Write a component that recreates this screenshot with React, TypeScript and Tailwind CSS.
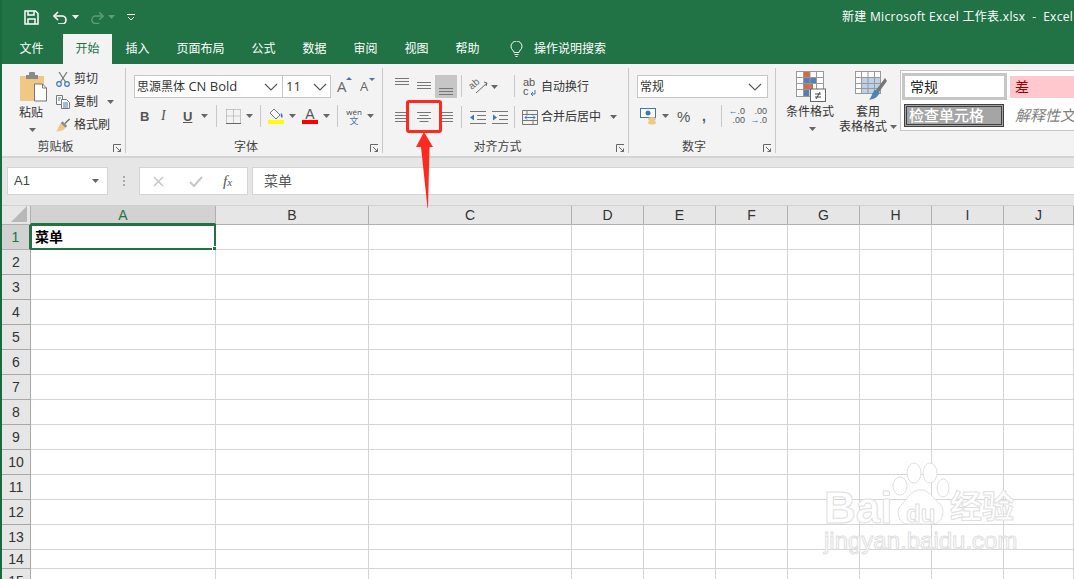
const cjk = "font-['Open_Sans','Noto_Sans_CJK_SC',sans-serif]";

function Caret({ className = '' }: { className?: string }) {
  return (
    <svg width="7" height="4" viewBox="0 0 7 4" className={`shrink-0 ${className}`}>
      <path d="M0 0h7L3.5 4z" fill="#666" />
    </svg>
  );
}

function Chevron() {
  return (
    <svg width="14" height="8" viewBox="0 0 14 8" fill="none" stroke="#555" strokeWidth="1.1">
      <path d="M1 1l6 6 6-6" />
    </svg>
  );
}

function Sep({ h = 'h-[22px]', mx = '' }: { h?: string; mx?: string }) {
  return <div className={`w-px bg-[#c8c8c8] shrink-0 ${h} ${mx}`} />;
}

// launcher arrow in the corner of each ribbon group
function Launcher() {
  return (
    <svg width="9" height="9" viewBox="0 0 9 9" fill="none" stroke="#666" className="shrink-0">
      <path d="M.5 8V.5H8" />
      <path d="M3 3l4.500 4.500M7.500 4.500v3h-3" />
    </svg>
  );
}

function Group({ w, label, children }: { w: string; label: string; children: React.ReactNode }) {
  return (
    <div className={`${w} shrink-0 h-[92px] flex flex-col`}>
      <div className="flex-1 min-h-0">{children}</div>
      <div className="h-[20px] flex items-center pt-[2px]">
        <div className="flex-1 text-center text-[12px] leading-none text-[#444]">{label}</div>
        <div className="w-[16px] flex justify-end pr-[3px] pt-[3px]">
          <Launcher />
        </div>
      </div>
    </div>
  );
}

function Lines({ w = [14, 14, 14], align = 'center', gap = 2 }: { w?: number[]; align?: string; gap?: number }) {
  const h = w.length * (gap + 1) - gap;
  const max = Math.max(...w);
  return (
    <svg width={max} height={h} viewBox={`0 0 ${max} ${h}`} className="shrink-0">
      {w.map((l, i) => {
        const x = align === 'left' ? 0 : align === 'right' ? max - l : (max - l) / 2;
        return <rect key={i} x={x} y={i * (gap + 1)} width={l} height="1" fill="#777" />;
      })}
    </svg>
  );
}

function Clipboard() {
  return (
    <Group w="w-[123px]" label="剪贴板">
      <div className="flex">
        <div className="w-[54px] pt-[8px] pl-[17px] flex flex-col">
          <svg width="28" height="30" viewBox="0 0 28 30">
            <rect x="1" y="4" width="24" height="25" rx="1" fill="#efc884" />
            <rect x="7" y="3" width="12" height="4" fill="#8a8a8a" />
            <rect x="10" y="0" width="6" height="4" rx="1" fill="#8a8a8a" />
            <path d="M15.500 12h8l4 4v13h-12z" fill="#fff" stroke="#777" />
            <path d="M23.500 12v4h4" fill="none" stroke="#777" />
          </svg>
          <div className="text-[12px] leading-none mt-[5px] text-[#333] w-[28px] text-center -ml-[2px]">粘贴</div>
          <Caret className="mt-[9px] ml-[10px]" />
        </div>
        <div className="flex flex-col pt-[6px] gap-[5px] text-[12px] text-[#333]">
          <div className="flex items-center h-[18px] gap-[4px]">
            <svg width="14" height="15" viewBox="0 0 14 15" fill="none" strokeWidth="1.200">
              <path d="M3 0l6.500 10M11 0L4.500 10" stroke="#777" />
              <circle cx="3" cy="12" r="2.300" stroke="#3f78b5" />
              <circle cx="11" cy="12" r="2.300" stroke="#3f78b5" />
            </svg>
            <span className="leading-none">剪切</span>
          </div>
          <div className="flex items-center h-[18px] gap-[4px]">
            <svg width="14" height="14" viewBox="0 0 14 14" fill="none" stroke="#777">
              <path d="M.5.500h6v9h-6z" fill="#fff" />
              <path d="M5.500 4.500h5l3 3v6h-8z" fill="#fff" />
              <path d="M7 8h5M7 10h5M7 12h5M2 3h3M2 5h2" stroke="#3f78b5" />
            </svg>
            <span className="leading-none">复制</span>
            <Caret className="ml-[5px]" />
          </div>
          <div className="flex items-center h-[18px] gap-[4px]">
            <svg width="14" height="14" viewBox="0 0 15 14">
              <path d="M9 5l5-5 1 1-5 5z" fill="#666" />
              <path d="M7 3l5 5-2 2-5-5z" fill="#8a8a8a" />
              <path d="M5 5l5 5c-2 3-5 4-10 4 2-2 2-4 5-9z" fill="#efc884" />
            </svg>
            <span className="leading-none">格式刷</span>
          </div>
        </div>
      </div>
    </Group>
  );
}

function FontGroup() {
  return (
    <Group w="w-[256px]" label="字体">
      <div className="pt-[11px] pl-[8px]">
        <div className="flex items-center h-[23px]">
          <div className="w-[149px] h-full bg-white border border-[#c6c6c6] flex items-center pl-[2px] pr-[4px] justify-between text-[12px] text-[#333]">
            <span className="leading-none whitespace-nowrap">
              思源黑体<span className="text-[13px]"> CN Bold</span>
            </span>
            <Chevron />
          </div>
          <div className="w-[48px] h-full bg-white border border-l-0 border-[#c6c6c6] flex items-center pl-[3px] pr-[3px] justify-between text-[13px] text-[#333]">
            <span className="leading-none">11</span>
            <Chevron />
          </div>
          <div className="relative ml-[6px] w-[14px] text-[15px] leading-none text-[#666]">
            A
            <svg width="6" height="3" viewBox="0 0 6 3" className="absolute -top-[2px] left-[9px]">
              <path d="M3 0l3 3H0z" fill="#3f78b5" />
            </svg>
          </div>
          <div className="relative ml-[9px] w-[14px] text-[13px] leading-none text-[#666]">
            A
            <svg width="6" height="3" viewBox="0 0 6 3" className="absolute -top-[2px] left-[9px]">
              <path d="M0 0h6L3 3z" fill="#3f78b5" />
            </svg>
          </div>
        </div>
        <div className="flex items-center h-[24px] mt-[6px] font-['Liberation_Sans',sans-serif] text-[#555] text-[13px] leading-none">
          <span className="w-[10px] ml-[6px] font-bold">B</span>
          <span className="w-[10px] ml-[11px] italic font-['Liberation_Serif',serif] text-[14px]">I</span>
          <span className="w-[11px] ml-[12px] font-bold underline">U</span>
          <Caret className="ml-[7px]" />
          <Sep mx="ml-[8px]" />
          <svg width="15" height="15" viewBox="0 0 15 15" className="ml-[9px]" fill="none" stroke="#999" strokeDasharray="1 1">
            <path d="M.5.500h14v13M.5.500v13M7.500.500v13M.5 7h14" />
            <path d="M0 14.500h15" stroke="#666" strokeDasharray="none" />
          </svg>
          <Caret className="ml-[5px]" />
          <Sep mx="ml-[7px]" />
          <div className="ml-[7px] w-[16px] flex flex-col items-center">
            <svg width="16" height="12" viewBox="0 0 16 12">
              <path d="M6 1l6 6-4 4-6-6z" fill="#fff" stroke="#777" />
              <path d="M13 5c2 1 2 4 1 5-1-1-2-2-1-5z" fill="#3f78b5" />
            </svg>
            <div className="w-[16px] h-[4px] bg-[#ffff00]" />
          </div>
          <Caret className="ml-[5px]" />
          <div className="ml-[6px] w-[16px] flex flex-col items-center">
            <span className="text-[14px] h-[12px] leading-[12px] text-[#555]">A</span>
            <div className="w-[16px] h-[4px] bg-[#ff0000]" />
          </div>
          <Caret className="ml-[5px]" />
          <Sep mx="ml-[7px]" />
          <div className="ml-[8px] w-[16px] flex flex-col items-center font-['Open_Sans','Noto_Sans_CJK_SC',sans-serif]">
            <span className="text-[8px] leading-[9px] text-[#444]">wén</span>
            <span className="text-[9px] leading-[10px] text-[#3f78b5]">文</span>
          </div>
          <Caret className="ml-[5px]" />
        </div>
      </div>
    </Group>
  );
}

function Align() {
  return (
    <Group w="w-[245px]" label="对齐方式">
      <div className="pt-[11px] pl-[11px] text-[12px] text-[#333]">
        <div className="flex h-[23px]">
          <div className="w-[19px] flex pl-[1px] pt-[3px]">
            <Lines />
          </div>
          <div className="w-[22px] flex justify-center pt-[7px]">
            <Lines />
          </div>
          <div className="w-[22px] bg-[#c6c6c6] flex justify-center items-end pb-[3px] mr-[4px]">
            <Lines />
          </div>
          <Sep />
          <svg width="18" height="18" viewBox="0 0 18 18" fill="none" className="ml-[8px] mt-[2px] overflow-visible">
            <text x="1" y="11" fontSize="10" fill="#666" transform="rotate(-40 4 11)" fontFamily="Liberation Sans">ab</text>
            <path d="M6 16L17 6M14 5l3 1-1 3" stroke="#666" />
          </svg>
          <Caret className="ml-[3px] mt-[10px]" />
          <Sep mx="ml-[16px]" />
          <div className="ml-[8px] w-[15px] h-[18px] mt-[3px] leading-[9px] text-[11px] text-[#555] font-['Liberation_Sans',sans-serif] whitespace-nowrap">
            ab
            <br />
            <span className="inline-flex items-end gap-[1px]">
              c
              <svg width="6" height="6" viewBox="0 0 6 6" fill="none" stroke="#3f78b5">
                <path d="M5 0v4H1M3 2L1 4l2 2" />
              </svg>
            </span>
          </div>
          <span className="ml-[3px] leading-none self-center">自动换行</span>
        </div>
        <div className="flex items-center h-[24px] mt-[7px]">
          <div className="w-[19px] flex pl-[1px]">
            <Lines w={[12, 12, 12, 12]} />
          </div>
          <div className="w-[22px] flex justify-center">
            <Lines w={[14, 9, 14, 9]} />
          </div>
          <div className="w-[24px] flex justify-center">
            <Lines w={[12, 12, 12, 12]} />
          </div>
          <div className="w-[2px]" />
          <Sep />
          <svg width="16" height="13" viewBox="0 0 16 13" className="ml-[8px]" fill="none">
            <path d="M0 .500h16M7 4.500h9M7 8.500h9M0 12.500h16" stroke="#777" />
            <path d="M0 6.500l4-3v6z" fill="#3f78b5" />
          </svg>
          <svg width="16" height="13" viewBox="0 0 16 13" className="ml-[6px]" fill="none">
            <path d="M0 .500h16M7 4.500h9M7 8.500h9M0 12.500h16" stroke="#777" />
            <path d="M5 6.500l-4-3v6z" fill="#3f78b5" />
          </svg>
          <Sep mx="ml-[6px]" />
          <svg width="16" height="15" viewBox="0 0 16 15" className="ml-[7px]" fill="none" stroke="#777">
            <path d="M.5.500h15v14H.500zM.5 4.500h15M.5 10.500h15M5 .500v4M11 10.500v4" />
            <path d="M3 7.500h10M3 7.500l2-2M3 7.500l2 2M13 7.500l-2-2M13 7.500l-2 2" stroke="#3f78b5" />
          </svg>
          <span className="ml-[3px] leading-none">合并后居中</span>
          <Caret className="ml-[9px]" />
        </div>
      </div>
    </Group>
  );
}

function NumberGroup() {
  return (
    <Group w="w-[146px]" label="数字">
      <div className="pt-[11px] pl-[8px]">
        <div className="w-[131px] h-[23px] bg-white border border-[#c6c6c6] flex items-center justify-between pl-[2px] pr-[5px] text-[12px] text-[#333]">
          <span className="leading-none">常规</span>
          <Chevron />
        </div>
        <div className="flex items-center h-[24px] mt-[6px] text-[#555] font-['Liberation_Sans',sans-serif]">
          <svg width="18" height="17" viewBox="0 0 18 17" className="ml-[3px]">
            <rect x=".5" y=".5" width="15" height="9" fill="#fff" stroke="#3f78b5" />
            <circle cx="8" cy="5" r="2.500" fill="#3f78b5" />
            <ellipse cx="12" cy="11" rx="4" ry="2" fill="#efc884" />
            <ellipse cx="12" cy="14.500" rx="4" ry="2" fill="#efc884" />
          </svg>
          <Caret className="ml-[4px]" />
          <span className="ml-[8px] w-[14px] text-[15px] leading-none">%</span>
          <span className="ml-[11px] w-[8px] text-[14px] font-bold leading-none">,</span>
          <Sep mx="ml-[11px]" />
          <div className="ml-[6px] w-[17px] text-[9px] leading-[9px] text-right whitespace-nowrap">
            <span className="text-[#3f78b5]">←</span>.0
            <br />
            .00
          </div>
          <div className="ml-[5px] w-[17px] text-[9px] leading-[9px] text-right whitespace-nowrap">
            .00
            <br />
            <span className="text-[#3f78b5]">→</span>.0
          </div>
        </div>
      </div>
    </Group>
  );
}

function Styles() {
  return (
    <div className="flex-1 min-w-0 flex h-[92px] text-[12px] text-[#333]">
      <div className="w-[70px] pl-[20px] pt-[7px] flex flex-col shrink-0">
        <svg width="30" height="31" viewBox="0 0 30 31" fill="none">
          <rect x=".5" y=".5" width="27" height="25" fill="#fff" stroke="#999" />
          <rect x="8" y="1" width="6" height="6" fill="#d9673f" />
          <rect x="8" y="7" width="12" height="5" fill="#4f81bd" />
          <rect x="8" y="13" width="9" height="5" fill="#d9673f" />
          <rect x="8" y="19" width="5" height="6" fill="#4f81bd" />
          <path d="M7.500 0v26M14 0v26M20.500 0v26M0 6.500h28M0 12.500h28M0 18.500h28" stroke="#999" />
          <rect x="14.500" y="18" width="15" height="12.500" fill="#fff" stroke="#666" />
          <path d="M19 23h6M19 26h6M24 21l-4 7" stroke="#444" />
        </svg>
        <div className="-ml-[11px] w-[50px] text-center leading-none mt-[4px] whitespace-nowrap">条件格式</div>
        <Caret className="ml-[13px] mt-[9px]" />
      </div>
      <div className="w-[54px] pt-[7px] flex flex-col shrink-0 relative">
        <svg width="32" height="31" viewBox="0 0 32 31" fill="none" className="ml-[9px]">
          <rect x=".5" y=".5" width="25" height="22" fill="#fff" stroke="#999" />
          <rect x="7" y="6" width="18" height="16" fill="#bcd0e8" />
          <path d="M6.500 0v23M13 0v23M19.500 0v23M0 6.500h26M0 12.500h26M0 17.500h26" stroke="#999" />
          <path d="M30 7L21 19l3 2L32 10z" fill="#777" />
          <path d="M20 19c3 0 5 2 4 4-2 4-6 5-10 6 3-3 3-8 6-10z" fill="#4f81bd" />
        </svg>
        <div className="w-[50px] -ml-[3px] text-center leading-none mt-[4px]">套用</div>
        <div className="flex items-center leading-none mt-[3px] w-[60px] -ml-[7px] shrink-0">
          <span className="whitespace-nowrap">表格格式</span>
          <Caret className="ml-[3px]" />
        </div>
      </div>
      <div className="flex-1 min-w-0 mt-[6px] mb-[25px] bg-white border-y border-l border-[#c6c6c6] overflow-hidden flex flex-col pl-[1px] pt-[2px]">
        <div className="flex items-center h-[27px] text-[14px]">
          <div className="w-[105px] shrink-0 h-[27px] border-[3px] border-[#c6c6c6] flex items-center pl-[5px] leading-none text-[#222]">常规</div>
          <div className="ml-[3px] w-[80px] shrink-0 h-[22px] bg-[#ffc7ce] text-[#9c0006] flex items-center pl-[5px] leading-none">差</div>
        </div>
        <div className="flex items-center h-[24px] mt-[3px] text-[15px]">
          <div className="ml-[2px] w-[100px] shrink-0 h-[23px] bg-[#a5a5a5] border-[3px] border-double border-[#3f3f3f] flex items-center pl-[2px] leading-none text-white font-medium whitespace-nowrap">检查单元格</div>
          <div className="ml-[11px] shrink-0 italic text-[#7f7f7f] leading-none whitespace-nowrap">解释性文</div>
        </div>
      </div>
    </div>
  );
}

function Ribbon() {
  const tabs = ['插入', '页面布局', '公式', '数据', '审阅', '视图', '帮助'];
  return (
    <>
      <div className="h-[34px] bg-[#217346] flex items-center text-white">
        <svg width="15" height="15" viewBox="0 0 15 15" fill="none" stroke="#fff" strokeWidth="1.500" className="ml-[22px]">
          <path d="M1 1h10.500L14 3.500V14H1z" />
          <path d="M4 1.500v3.500h6V1.500" />
          <path d="M4 14V9h7v5" />
        </svg>
        <svg width="15" height="13" viewBox="0 0 15 13" fill="none" stroke="#fff" strokeWidth="1.600" className="ml-[14px]">
          <path d="M5 1L1 5l4 4" />
          <path d="M1 5h8a4 4 0 0 1 0 8H5" />
        </svg>
        <Caret className="ml-[4px] [&_path]:fill-white" />
        <svg width="14" height="13" viewBox="0 0 15 13" fill="none" stroke="#5c9c7b" strokeWidth="1.600" className="ml-[11px]">
          <path d="M10 1l4 4-4 4" />
          <path d="M14 5H6a4 4 0 0 0 0 8h4" />
        </svg>
        <Caret className="ml-[4px] [&_path]:fill-[#5c9c7b]" />
        <svg width="8" height="7" viewBox="0 0 8 7" fill="none" stroke="#fff" className="ml-[12px]">
          <path d="M0 .500h8M1 3l3 3 3-3" />
        </svg>
        <div className="ml-auto text-[12px] tracking-[0.3px] leading-none whitespace-nowrap w-[232px]">
          新建 Microsoft Excel 工作表.xlsx &nbsp;-&nbsp; Excel
        </div>
      </div>
      <div className="h-[30px] bg-[#217346] flex text-white text-[12px] leading-none">
        <div className="w-[61px] pr-[2px] flex items-center justify-center">文件</div>
        <div className="w-[49px] flex items-center justify-center bg-[#f3f3f3] text-[#217346]">开始</div>
        {tabs.map((t) => (
          <div key={t} className="px-[13.5px] flex items-center">
            {t}
          </div>
        ))}
        <div className="flex items-center ml-[17px] gap-[11px]">
          <svg width="13" height="16" viewBox="0 0 13 16" fill="none" stroke="#fff">
            <path d="M4 11.500c0-2-3-3-3-6a5.500 5.500 0 0 1 11 0c0 3-3 4-3 6z" />
            <path d="M4.500 13.500h4M5.500 15.500h2" />
          </svg>
          <span>操作说明搜索</span>
        </div>
      </div>
      <div className="h-[94px] bg-[#f3f3f3] border-b-[2px] border-[#d4d4d4] flex overflow-hidden">
        <Clipboard />
        <Sep h="h-[85px] mt-[4px]" />
        <FontGroup />
        <Sep h="h-[85px] mt-[4px]" />
        <Align />
        <Sep h="h-[85px] mt-[4px]" />
        <NumberGroup />
        <Sep h="h-[85px] mt-[4px]" />
        <Styles />
      </div>
    </>
  );
}

function FormulaBar() {
  return (
    <div className="h-[48px] bg-[#e6e6e6] flex pt-[9px] pl-[5px] text-[13px] text-[#444] border-b border-[#d0d0d0]">
      <div className="w-[101px] h-[28px] bg-white border border-[#d4d4d4] flex items-center justify-between pl-[6px] pr-[8px] font-['Liberation_Sans',sans-serif]">
        <span>A1</span>
        <Caret />
      </div>
      <div className="w-[31px] h-[28px] flex flex-col items-center justify-center gap-[2px]">
        <i className="w-[2px] h-[2px] bg-[#aaa]" />
        <i className="w-[2px] h-[2px] bg-[#aaa]" />
        <i className="w-[2px] h-[2px] bg-[#aaa]" />
      </div>
      <div className="w-[109px] h-[28px] bg-white border border-[#d4d4d4] flex items-center pl-[13px]">
        <svg width="11" height="11" viewBox="0 0 11 11" fill="none" stroke="#c6c6c6" strokeWidth="1.500">
          <path d="M1 1l9 9M10 1l-9 9" />
        </svg>
        <svg width="14" height="11" viewBox="0 0 14 11" fill="none" stroke="#c6c6c6" strokeWidth="2" className="ml-[25px]">
          <path d="M1 6l4 4 8-9" />
        </svg>
        <span className="ml-[20px] italic text-[15px] leading-none font-['Liberation_Serif',serif] text-[#555]">
          f<span className="text-[11px]">x</span>
        </span>
      </div>
      <div className="flex-1 ml-[4px] h-[28px] bg-white border border-r-0 border-[#d4d4d4] flex items-center pl-[11px] text-[#555] text-[14px] leading-none">菜单</div>
    </div>
  );
}

const cols = ['A', 'B', 'C', 'D', 'E', 'F', 'G', 'H', 'I', 'J'];
const rows = Array.from({ length: 15 }, (_, i) => i + 1);

function Sheet() {
  return (
    <div className="relative grid grid-cols-[29px_185px_153px_203px_72px_72px_72px_72px_72px_72px_1fr] grid-rows-[19px_repeat(13,25px)_19px_25px] font-['Liberation_Sans',sans-serif] bg-white">
      <div className="bg-[#e6e6e6] border-r border-b border-[#b0b0b0] relative">
        <svg width="16" height="16" viewBox="0 0 16 16" className="absolute right-[3px] bottom-[2px]">
          <path d="M16 0v16H0z" fill="#b8b8b8" />
        </svg>
      </div>
      {cols.map((c, i) => (
        <div
          key={c}
          className={
            i === 0
              ? 'bg-[#d2d2d2] border-r border-b-2 border-b-[#217346] border-r-[#b0b0b0] flex items-center justify-center text-[14px] text-[#217346] leading-none'
              : 'bg-[#e6e6e6] border-r border-b border-[#b0b0b0] flex items-center justify-center text-[14px] text-[#333] leading-none'
          }
        >
          {c}
        </div>
      ))}
      {rows.map((r) => (
        <div key={r} className="contents">
          <div
            className={
              r === 1
                ? 'bg-[#d2d2d2] border-r-2 border-r-[#217346] border-b border-b-[#b0b0b0] flex items-center justify-center text-[14px] text-[#217346]'
                : 'bg-[#e6e6e6] border-r border-b border-[#a8a8a8] flex items-center justify-center text-[14px] text-[#333]'
            }
          >
            {r}
          </div>
          {cols.map((c) => (
            <div key={c} className="border-r border-b border-[#d4d4d4] relative">
              {r === 1 && c === 'A' && (
                <div className="absolute -left-[1px] -top-[1px] -right-[1px] -bottom-[1px] border-2 border-[#217346] flex items-center pl-[3px] pb-[2px] text-[14px] font-bold text-black font-['Noto_Sans_CJK_SC',sans-serif] leading-none">
                  菜单
                  <div className="absolute -right-[3px] -bottom-[3px] w-[5px] h-[5px] bg-[#217346] border border-white" />
                </div>
              )}
            </div>
          ))}
        </div>
      ))}
    </div>
  );
}

export default function App() {
  return (
    <div className={`relative w-[1074px] h-[579px] overflow-hidden border-l-2 border-[#1b6a3f] ${cjk}`}>
      <Ribbon />
      <FormulaBar />
      <Sheet />

      {/* red highlight box and arrow drawn over the screenshot */}
      <div className="absolute left-[404px] top-[100px] w-[36px] h-[33px] border-[3px] border-[#ff2a1f] rounded-[3px]" />
      <svg width="20" height="78" viewBox="0 0 20 78" className="absolute left-[413px] top-[131px]">
        <path d="M9 1L18 16H14.500L13 77H12.500L6 16H1z" fill="#ff2a1f" />
      </svg>

      {/* baidu watermark */}
      <div className="absolute left-[822px] top-[462px] w-[200px] h-[95px] text-white [-webkit-text-stroke:1px_#e0e0e0] font-['Liberation_Sans',sans-serif]">
        <svg width="60" height="66" viewBox="0 0 60 66" fill="#fff" stroke="#e0e0e0" className="absolute left-[66px] top-0">
          <ellipse cx="10" cy="24" rx="7" ry="9" />
          <ellipse cx="24" cy="11" rx="7" ry="10" />
          <ellipse cx="40" cy="11" rx="7" ry="10" />
          <ellipse cx="53" cy="26" rx="6" ry="9" />
          <path d="M30 28c10 0 12 8 20 14 6 6 3 20-8 20H18C8 62 5 48 12 42c6-5 8-14 18-14z" />
        </svg>
        <span className="absolute left-0 top-[24px] text-[44px] font-bold leading-none">Bai</span>
        <span className="absolute left-[82px] top-[40px] text-[24px] font-bold leading-none">du</span>
        <span className="absolute left-[126px] top-[26px] text-[32px] font-bold leading-none font-['Noto_Sans_CJK_SC',sans-serif]">经验</span>
        <span className="absolute left-0 top-[67px] text-[24px] leading-none whitespace-nowrap">jingyan.baidu.com</span>
      </div>
    </div>
  );
}
